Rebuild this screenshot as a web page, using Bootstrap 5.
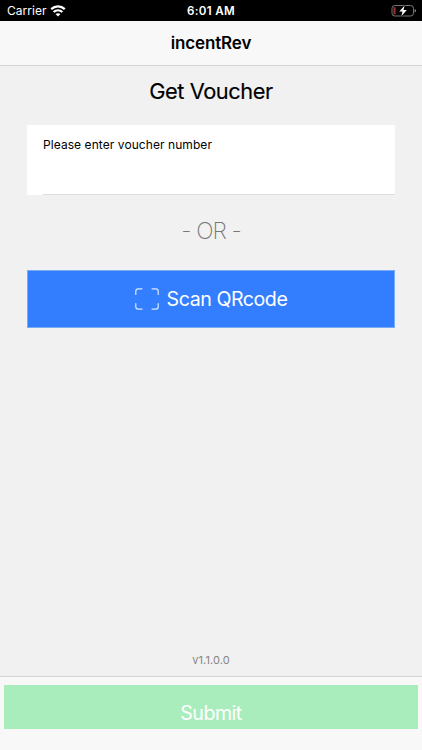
<!DOCTYPE html>
<html lang="en">
<head>
<meta charset="utf-8">
<meta name="viewport" content="width=device-width, initial-scale=1">
<title>incentRev</title>
<link href="https://cdn.jsdelivr.net/npm/bootstrap@5.3.0/dist/css/bootstrap.min.css" rel="stylesheet">
<style>
body{font-family:Inter,"Liberation Sans",sans-serif;background:#f1f1f1;color:#000;height:750px;overflow:hidden}
.status-bar{height:21px;background:#000;color:#fff;font-size:12px;line-height:21px;padding:0 5px 0 7px}
.status-bar>*{flex:1 1 0}
.carrier{letter-spacing:.02px}
.clock{font-weight:600;font-size:11.6px;letter-spacing:.35px;padding:1px 2px 0 0}
.title-bar{height:45px;background:#f8f8f8;border-bottom:1px solid #d6d6d6}
.title-bar h1{font-size:17px;font-weight:600;line-height:44px;letter-spacing:-.15px}
.content{padding:0 27px}
.page-title{font-size:21.8px;font-weight:400;line-height:28px;margin:11px 0 20px;letter-spacing:-.45px;-webkit-text-stroke:.15px #000}
.voucher-field{height:70px;padding-left:16px}
.voucher-inner{height:70px;border-bottom:1px solid #dedede;padding-top:10px;font-size:12px;line-height:20px;letter-spacing:.07px}
.divider-text{font-size:23px;font-weight:200;line-height:30px;margin:21px 0 24px;color:#777;letter-spacing:-1px;word-spacing:.3px}
.scan-btn{height:58px;background:#327eff;color:#fff;font-size:19.6px;line-height:30px;gap:8px;border:1px solid #78acf8}
.scan-label{letter-spacing:-.45px}
.version{font-size:11px;line-height:16px;color:#858585;margin-bottom:8px;letter-spacing:.1px}
.bottom-bar{height:74px;background:#f8f8f8;border-top:1px solid #d4d4d4;padding:8px 4px 0}
.submit-btn{height:44px;background:#a9edbd;color:#fff;font-size:19.6px;line-height:26px;padding-top:12px;letter-spacing:-.5px}
</style>
<script src="https://cdn.jsdelivr.net/npm/bootstrap@5.3.0/dist/js/bootstrap.bundle.min.js"></script>
</head>
<body class="d-flex flex-column m-0">
<div class="status-bar d-flex align-items-center flex-shrink-0">
  <div class="d-flex align-items-center"><span class="carrier">Carrier</span>
    <svg class="ms-1" width="16" height="12" viewBox="0 0 16 12" fill="none" stroke="#fff" stroke-width="2.3"><path d="M1.2 4.2C5.2.4 10.8.4 14.8 4.2M3.6 7c2.6-2.3 6.2-2.3 8.8 0"/><path d="M8 11.6 5.5 9.1Q8 7.2 10.5 9.1Z" fill="#fff" stroke="none"/></svg>
  </div>
  <div class="clock text-center">6:01 AM</div>
  <div class="d-flex justify-content-end align-items-center">
    <svg width="26" height="13" viewBox="0 0 26 13"><rect x="1" y="1.5" width="21.5" height="10.5" rx="2.8" fill="none" stroke="#777"/><path d="M23.7 5v3.6q1.4-.6 1.4-1.8T23.7 5" fill="#888"/><rect x="2.4" y="3" width="2.2" height="7.5" rx=".8" fill="#9b2d30"/><path d="M13.6 1.6 8.3 7.5h3.2l-1.2 4.7 5.5-6.2h-3.3z" fill="#fff" stroke="#000" stroke-width="1.4" paint-order="stroke"/></svg>
  </div>
</div>
<header class="title-bar text-center flex-shrink-0"><h1 class="m-0">incentRev</h1></header>
<main class="content flex-grow-1 d-flex flex-column text-center">
  <h2 class="page-title">Get Voucher</h2>
  <div class="voucher-field bg-white text-start"><div class="voucher-inner">Please enter voucher number</div></div>
  <div class="divider-text">- OR -</div>
  <button type="button" class="scan-btn btn rounded-0 w-100 p-0 d-flex justify-content-center align-items-center">
    <svg width="24" height="22" viewBox="0 0 24 22" fill="none" stroke="#d9ecff" stroke-width="1.2" stroke-linecap="round"><path d="M.8 6.5V3.2Q.8.8 3.2.8H7M17 .8h3.8q2.4 0 2.4 2.4v3.3M23.2 15.5v3.3q0 2.4-2.4 2.4H17M7 21.2H3.2Q.8 21.2.8 18.8v-3.3"/></svg>
    <span class="scan-label">Scan QRcode</span>
  </button>
  <div class="version mt-auto">v1.1.0.0</div>
</main>
<footer class="bottom-bar flex-shrink-0"><button type="button" class="submit-btn btn rounded-0 border-0 w-100 px-0 pb-0">Submit</button></footer>
</body>
</html>
